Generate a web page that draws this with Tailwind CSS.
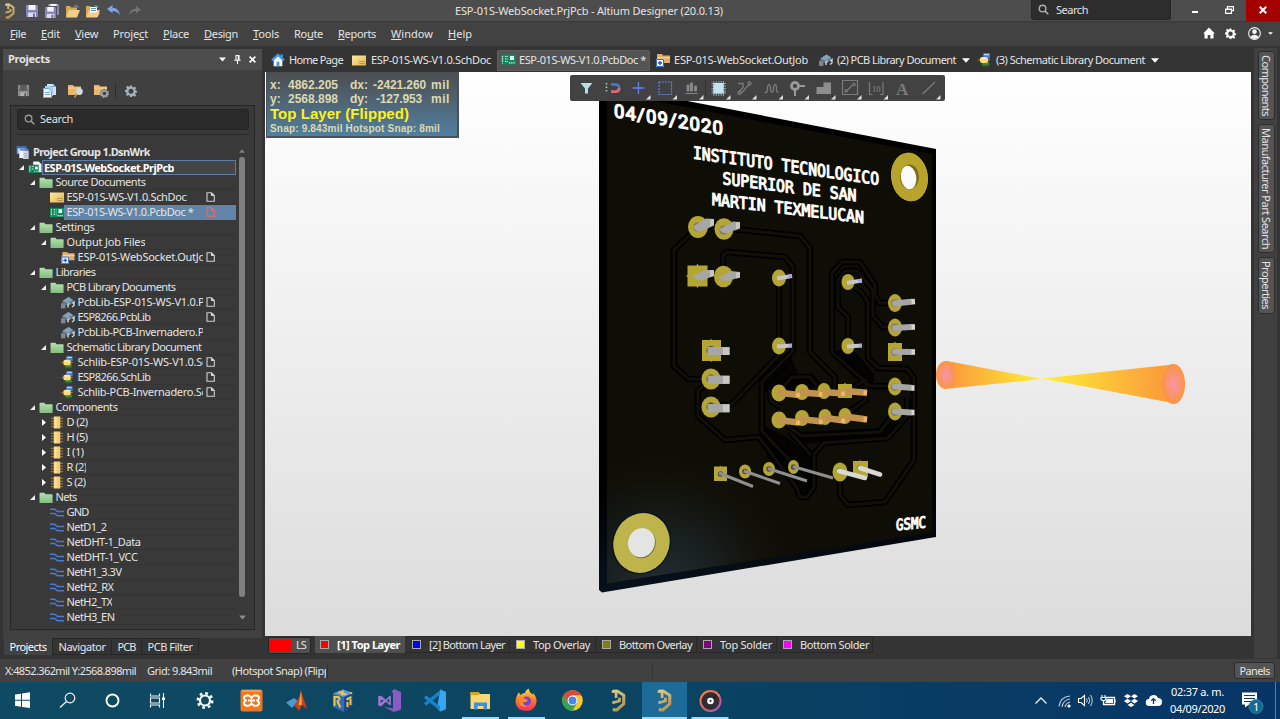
<!DOCTYPE html>
<html lang="en">
<head>
<meta charset="utf-8">
<title>ESP-01S-WebSocket.PrjPcb - Altium Designer (20.0.13)</title>
<script src="https://cdn.jsdelivr.net/npm/@tailwindcss/browser@4"></script>
</head>
<body class="w-[1280px] h-[719px] overflow-hidden bg-[#343434] text-[#e4e4e4] text-[11px] leading-[15px] font-['Noto_Sans','Open_Sans',sans-serif] flex flex-col select-none">

<!-- icon library -->
<svg class="absolute w-0 h-0">
  <defs>
    <linearGradient id="gold" gradientUnits="userSpaceOnUse" x1="0" y1="0" x2="16" y2="24"><stop offset="0" stop-color="#e6cf8f"/><stop offset="1" stop-color="#a98a45"/></linearGradient>
    <linearGradient id="ff" x1="0" y1="0" x2="0" y2="1"><stop offset="0" stop-color="#ffe23c"/><stop offset=".5" stop-color="#ff7a24"/><stop offset="1" stop-color="#fa2c5c"/></linearGradient>
    <linearGradient id="grv" x1="0" y1="0" x2="1" y2="1"><stop offset="0" stop-color="#ff8a3c"/><stop offset=".5" stop-color="#e0605c"/><stop offset="1" stop-color="#a05ce0"/></linearGradient>
    <linearGradient id="grn" x1="0" y1="0" x2="0" y2="1"><stop offset="0" stop-color="#b4e3ad"/><stop offset="1" stop-color="#85bd80"/></linearGradient>
    <linearGradient id="ylw" x1="0" y1="0" x2="1" y2="1"><stop offset="0" stop-color="#ffeaa0"/><stop offset="1" stop-color="#e0b552"/></linearGradient>
  </defs>
  <symbol id="altium" viewBox="0 0 16 24"><path d="M3 4V2.500L7 2 14 6.500v9L6.500 22 2.500 21.500" fill="none" stroke="url(#gold)" stroke-width="3.200" stroke-linejoin="round"/><path d="M6 3v6.500M2 14.500 9.500 12.500V9" fill="none" stroke="url(#gold)" stroke-width="2.800"/></symbol>
  <symbol id="save" viewBox="0 0 14 14"><path d="M1 1h11l1 1v11H1z" fill="#8583bb"/><path d="M3.500 1h7v5h-7z" fill="#f4f4fa"/><path d="M3 8.500h8V13H3z" fill="#dcdcec"/><path d="M8 9.500h2V13H8z" fill="#6e6ca8"/></symbol>
  <symbol id="saveg" viewBox="0 0 14 14"><path d="M1 1h12v12H1z" fill="#8a8a8a"/><path d="M3.500 1h7v5h-7z" fill="#5a5a5a"/><path d="M2 6.500h10" stroke="#454545"/><path d="M3.500 9h7v4h-7z" fill="#b0b0b0"/><path d="M8 10h1.500v3H8z" fill="#444"/></symbol>
  <symbol id="open" viewBox="0 0 16 14"><path d="M1 13V2h4l1 1.500h6V6" fill="#d9a857"/><path d="M1 13.500 4 6h11l-3 7.500z" fill="#f3ce86"/><path d="M9 2.200q3-1.500 4.500 1.300" stroke="#4e93ad" stroke-width="1.400" fill="none"/></symbol>
  <symbol id="home" viewBox="0 0 16 16"><path d="M3 7v8h10V7L8 3z" fill="#f3f7fb"/><path d="M1 8.500 8 2l7 6.500" fill="none" stroke="#3e93e6" stroke-width="2.600"/><path d="M11 1.500h2.500V6H11z" fill="#3e93e6"/><path d="M6.500 10h3v5h-3z" fill="#3e93e6"/></symbol>
  <symbol id="sch" viewBox="0 0 14 11"><path d="M0 .5h14v10H0z" fill="url(#ylw)"/><path d="M7.500 6h5v3h-5z" fill="#b8954a"/><path d="M8 7.500h4" stroke="#f7dc94" stroke-width=".8"/></symbol>
  <symbol id="pcb" viewBox="0 0 15 11"><path d="M0 .5h15v10H0z" fill="#0f8a5c"/><path d="M1.500 2v7.500M4 2.500h3M4 5h3M4 7.500h3" stroke="#c9f1dd" stroke-width="1.200" stroke-dasharray="1.500 .8" fill="none"/><path d="M9 2h4v4H9z" fill="#e8fff4"/><path d="M8 8.800h6" stroke="#e8fff4" stroke-width="1.200" stroke-dasharray="1.200 1"/></symbol>
  <symbol id="job" viewBox="0 0 14 14"><path d="M1 9V1h5l1 1.500h7V10H1z" fill="#dcae6c"/><path d="M1 4h13v1.500H1z" fill="#f3d29c"/><path d="M0 6h8v8H0z" fill="#eef4ff"/><path d="M.5 6.500h7v7h-7z" fill="none" stroke="#2f6fd6"/><path d="M2 10h4M4 8v4" stroke="#2157b8" stroke-width="1.300"/></symbol>
  <symbol id="plib" viewBox="0 0 14 12"><path d="M1.500 4.500 7.500.5l4.500 3v3L7 9.500 1.500 6.500z" fill="#5f7c90"/><path d="M1.500 4.500 7.500.5l4.500 3-5.500 3z" fill="#86a1b3"/><path d="M0 6.500h4.500V12H0z" fill="#6c767e"/><path d="M1 7.500v4M3 7.500v4" stroke="#a4aeb5" stroke-width=".7"/><path d="M7 11V8.500q0-1.500 1.500-1.500M11 10.500l2-1.500V5.500L11.500 7" stroke="#ccd6dc" stroke-width="1.400" fill="none"/></symbol>
  <symbol id="slib" viewBox="0 0 14 14"><path d="M5 .5h7v5H5z" fill="#3f7fd8"/><path d="M6 1.500h5" stroke="#b5d5ff" stroke-width="1.500"/><path d="M4 9h7v3.500H4z" fill="#3b8a2c"/><path d="M5 13.500v-2M7.500 14v-2M10 13.500v-2" stroke="#2a6a20"/><rect x="2" y="4" width="8" height="6" rx="2" fill="#ffd978"/><path d="M3.500 5.500h5" stroke="#fff3c8"/><path d="M0 7h2M10 7h2" stroke="#b08a30"/></symbol>
  <symbol id="folder" viewBox="0 0 13 11"><path d="M.5 10.500V1.800q0-.8.800-.8H5l1 1.500h6q.6 0 .6.700v7.300z" fill="url(#grn)"/></symbol>
  <symbol id="chip" viewBox="0 0 14 14"><path d="M.5 2.500h13M.5 5.500h13M.5 8.500h13M.5 11.500h13" stroke="#a8883f"/><path d="M3.500.5h7v13h-7z" fill="#f5cd78"/><path d="M4.500 1h2v12h-2z" fill="#ffe0a0"/></symbol>
  <symbol id="net" viewBox="0 0 15 10"><path d="M0 1.500h5l3 2.500h7M0 6h5l3 2.500h7" fill="none" stroke="#4a7ad8" stroke-width="1.600"/></symbol>
  <symbol id="grp" viewBox="0 0 14 14"><path d="M0 0h11v9H0z" fill="#3f69b0"/><path d="M1 2.500h8V8H1z" fill="#b8cbe8"/><path d="M4 3h9v8H4z" fill="#5a86cc"/><path d="M3 5h6v8H3z" fill="#f2f5fa"/><path d="M7 5.500h6V14H7z" fill="#d5dde8"/><path d="M8 8h4M8 10h4M8 12h4" stroke="#7c8fae" stroke-width=".7"/></symbol>
  <symbol id="prj" viewBox="0 0 14 14"><path d="M5 .5h6l3 3V12H5z" fill="#f1f3f5"/><path d="M0 4h11v9H0z" fill="#0f8257"/><path d="M1.500 5.500v6M3.500 6h2M3.500 8.500h2" stroke="#bff0d9" stroke-width="1.100"/><path d="M7 6h3v3H7z" fill="#e6fff4"/><path d="M6 11h4.500" stroke="#e6fff4" stroke-dasharray="1 .8"/></symbol>
  <symbol id="page" viewBox="0 0 9 10"><path d="M1 .7h4.500L8.300 3.500V9.300H1zM5.500.7v2.800h2.800" fill="none" stroke="currentColor" stroke-width="1.100"/></symbol>
  <symbol id="mag" viewBox="0 0 12 12"><circle cx="5" cy="5" r="3.600" fill="none" stroke="currentColor" stroke-width="1.500"/><path d="m7.600 7.600 3.600 3.600" stroke="currentColor" stroke-width="1.800"/></symbol>
  <symbol id="gear" viewBox="0 0 24 24"><path fill="currentColor" fill-rule="evenodd" d="M10 1h4l.6 3.200 2.200.9L19.500 3.200l2.800 2.800-1.900 2.700.9 2.200 3.200.6v3.500l-3.200.6-.9 2.200 1.900 2.700-2.800 2.800-2.700-1.900-2.200.9L14 24h-4l-.6-3-2.200-.9-2.700 1.900L1.700 19.200l1.900-2.700-.9-2.200L0 14v-4l3-.600.9-2.200L2 4.500 4.800 1.700l2.700 1.900 2.200-.9zM12 7.500a5 5 0 1 0 0 10 5 5 0 0 0 0-10z"/></symbol>
  <symbol id="dd" viewBox="0 0 8 5"><path d="M0 .3h8L4 4.700z" fill="currentColor"/></symbol>
</svg>

<!-- title bar -->
<header class="h-[21px] shrink-0 bg-[#4d4d4d] flex items-center">
  <svg class="w-[11px] h-[16px] ml-[4px]"><use href="#altium"/></svg>
  <svg class="w-[14px] h-[14px] ml-[10px]"><use href="#save"/></svg>
  <svg class="w-[16px] h-[16px] ml-[5px]" viewBox="0 0 16 16"><use href="#save" x="3" y="0" width="13" height="13"/><path d="M0 3h13v13H0z" fill="#4d4d4d"/><use href="#save" x="0" y="3" width="13" height="13"/></svg>
  <svg class="w-[16px] h-[14px] ml-[5px]"><use href="#open"/></svg>
  <svg class="w-[16px] h-[14px] ml-[4px]" viewBox="0 0 16 14"><use href="#open" width="16" height="14"/><path d="M5 3h7v6H5z" fill="#fff"/><path d="M6 4.500h5M6 6.500h5" stroke="#5c93c6"/><path d="M2.500 13 5 8.500h10L12.500 13z" fill="#f3ce86"/></svg>
  <svg class="w-[14px] h-[11px] ml-[6px]" viewBox="0 0 14 11"><path d="M0 4 5.500 0v2.700Q12 3 13 10.500 10.500 6 5.500 6v2.200z" fill="#7fa6e4"/></svg>
  <svg class="w-[13px] h-[10px] ml-[7px]" viewBox="0 0 14 11"><path d="M14 4 8.500 0v3Q2 3 1 10.500 3.500 5.500 8.500 5.500v2.700z" fill="#747474"/></svg>
  <div class="ml-[314px] whitespace-nowrap"><span data-w="268">ESP-01S-WebSocket.PrjPcb - Altium Designer (20.0.13)</span></div>
  <div class="ml-[308px] w-[140px] h-[20px] self-start bg-[#2d2d2d] rounded-b-[3px] border border-t-0 border-[#262626] flex items-center">
    <svg class="w-[11px] h-[11px] ml-[6px] text-[#b0b0b0]"><use href="#mag"/></svg>
    <span class="ml-[7px] pb-px" data-w="32">Search</span>
  </div>
  <svg class="w-[6px] h-[3px] ml-[21px] mt-[4px]"><rect width="6" height="2" fill="#fff"/></svg>
  <svg class="w-[9px] h-[8px] ml-[27px] -mt-px" viewBox="0 0 9 8"><path d="M2.500 2.500V.7h6v4H6.500M.6 3h5.800v4.300H.6zM.6 3.500h6" fill="none" stroke="#fff" stroke-width="1.200"/></svg>
  <div class="ml-auto w-[34px] h-[21px] bg-[#a40000] flex items-center justify-center pb-px"><svg class="w-[8px] h-[8px]" viewBox="0 0 8 8"><path d="m.7.700 6.600 6.600M7.300.7.700 7.300" stroke="#fff" stroke-width="2"/></svg></div>
</header>

<!-- menu bar -->
<nav class="h-[25px] shrink-0 bg-[#424242] border-t border-[#393939] flex items-center pl-[10px] pb-[2px] gap-[15px]">
  <span data-w="16"><u>F</u>ile</span><span data-w="19"><u>E</u>dit</span><span data-w="23"><u>V</u>iew</span><span data-w="35">Proje<u>c</u>t</span><span data-w="26"><u>P</u>lace</span><span data-w="34"><u>D</u>esign</span><span data-w="26"><u>T</u>ools</span><span data-w="29">Ro<u>u</u>te</span><span data-w="38"><u>R</u>eports</span><span data-w="42"><u>W</u>indow</span><span data-w="24"><u>H</u>elp</span>
  <div class="ml-auto flex items-center pr-[7px]">
    <svg class="w-[12px] h-[12px]" viewBox="0 0 12 12"><path d="M6 .5 11.800 6.500H10.500V11.500H7.300V8H4.700v3.500H1.500V6.500H.2z" fill="#fff"/></svg>
    <svg class="w-[11px] h-[11px] ml-[10px] text-white"><use href="#gear"/></svg>
    <svg class="w-[13px] h-[13px] ml-[12px]" viewBox="0 0 14 14"><circle cx="7" cy="7" r="6.300" fill="none" stroke="#f2f2f2" stroke-width="1.200"/><circle cx="7" cy="5" r="2.500" fill="#f2f2f2"/><path d="M2.300 10.500Q7 6 11.700 10.500 7 15.500 2.300 10.500" fill="#f2f2f2"/></svg>
    <svg class="w-[5px] h-[3px] ml-[7px] text-white"><use href="#dd"/></svg>
  </div>
</nav>

<div class="h-[613px] shrink-0 flex">
  <!-- projects panel -->
  <aside class="w-[265px] h-[613px] shrink-0 flex flex-col pt-[3px] pl-[3px]">
    <div class="w-[259px] h-[589px] bg-[#404040] flex flex-col">
      <div class="h-[21px] bg-[#4d4d4d] flex items-center pl-[5px] pb-[2px] font-bold">
        <span data-w="42">Projects</span>
        <svg class="w-[7px] h-[5px] ml-[169px] mt-px text-white"><use href="#dd"/></svg>
        <svg class="w-[7px] h-[9px] ml-[8px] mt-px" viewBox="0 0 7 9"><path d="M1.500.5h4M2 .5v4.500M5 .5v4.500M4.300.5V5M.3 5.300h6.400M3.500 5.500V9" stroke="#fff" stroke-width="1.100"/></svg>
        <svg class="w-[7px] h-[7px] ml-[8px] mt-px" viewBox="0 0 8 8"><path d="m.7.700 6.600 6.600M7.300.7.700 7.300" stroke="#fff" stroke-width="1.800"/></svg>
      </div>
      <div class="h-[35px] flex items-center pl-[14px] pt-[6px]">
        <svg class="w-[13px] h-[13px]"><use href="#saveg"/></svg>
        <svg class="w-[13px] h-[14px] ml-[13px]" viewBox="0 0 13 14"><path d="M4 0h6l3 3v8H4z" fill="#cfe4f7"/><path d="M2 2h6l2 2v8H2z" fill="#a9cdee"/><path d="M0 4h6l3 3v7H0z" fill="#e8f3fd"/><path d="M.5 4.500h5.300L8.500 7v6.500h-8zM2 8.500h5M2 10.500h5" fill="none" stroke="#4d94d0" stroke-width=".8"/><path d="M8.500 2.500h3" stroke="#4d94d0"/></svg>
        <svg class="w-[16px] h-[14px] ml-[12px]" viewBox="0 0 16 14"><path d="M0 11V1h5l1 1.500h7V11z" fill="#e8b76c"/><path d="M0 4h13" stroke="#f7d79b"/><circle cx="11.500" cy="7.500" r="3.300" fill="#c7dced"/><path d="m9 10-2.500 3.500" stroke="#b98b3a" stroke-width="1.600"/></svg>
        <svg class="w-[15px] h-[14px] ml-[10px]" viewBox="0 0 15 14"><path d="M0 11V1h5l1 1.500h7V11z" fill="#e8b76c"/><path d="M0 4h13" stroke="#f7d79b"/><circle cx="10.500" cy="9.500" r="4.200" fill="#404040"/><circle cx="10.500" cy="9.500" r="2.700" fill="none" stroke="#9fa6ab" stroke-width="1.800"/><circle cx="10.500" cy="9.500" r="4" fill="none" stroke="#9fa6ab" stroke-width="1.200" stroke-dasharray="1.600 1.500"/></svg>
        <div class="w-px h-[15px] bg-[#2c2c2c] ml-[6px]"></div>
        <svg class="w-[12px] h-[12px] ml-[9px] text-[#a4b2bd]"><use href="#gear"/></svg>
      </div>
      <div class="ml-[7px] w-[245px] h-[525px] bg-[#393939] border border-[#262626] pt-[3px]">
        <div class="ml-[6px] w-[232px] h-[21px] bg-[#2b2b2b] border border-[#242424] rounded-[3px] flex items-center pl-[6px]">
          <svg class="w-[11px] h-[11px] text-[#9a9a9a]"><use href="#mag"/></svg><span class="ml-[5px] pb-[2px]" data-w="33">Search</span>
        </div>
        <div class="ml-[6px] mt-[4px] w-[232px] h-px bg-[#2a2a2a]"></div>
        <div class="flex mt-[10px]">
          <div id="tree" class="w-[225px] flex flex-col"></div>
          <div class="w-[12px] h-[480px] flex flex-col items-center py-[4px]">
            <svg class="w-[6px] h-[4px] rotate-180 text-[#808080]"><use href="#dd"/></svg>
            <div class="w-[6px] h-[440px] rounded-full bg-[#808080] mt-[4px]"></div>
            <svg class="w-[7px] h-[5px] text-[#8c8c8c] mt-[18px]"><use href="#dd"/></svg>
          </div>
        </div>
      </div>
    </div>
    <div class="h-[17px] flex pl-px">
      <div class="w-[48px] bg-[#424242] flex items-center justify-center text-white"><span data-w="37">Projects</span></div>
      <div class="w-[60px] border border-[#272727] flex items-center justify-center"><span data-w="47">Navigator</span></div>
      <div class="w-[30px] border border-l-0 border-[#272727] flex items-center justify-center"><span data-w="18">PCB</span></div>
      <div class="w-[57px] border border-l-0 border-[#272727] flex items-center justify-center"><span data-w="45">PCB Filter</span></div>
    </div>
  </aside>

  <!-- editor -->
  <main class="w-[986px] shrink-0 flex flex-col">
    <div class="h-[26px] flex items-center pl-[6px] pt-[2px]">
      <svg class="w-[14px] h-[14px] shrink-0"><use href="#home"/></svg><span class="ml-[4px] pb-[2px]" data-w="54">Home Page</span>
      <svg class="w-[14px] h-[11px] shrink-0 ml-[9px]"><use href="#sch"/></svg><span class="ml-[5px] pb-[2px]" data-w="120">ESP-01S-WS-V1.0.SchDoc</span>
      <div class="ml-[6px] w-[153px] h-[21px] shrink-0 bg-[#545454] rounded-t-[2px] border border-[#5e5e5e] flex items-center pl-[3px]"><svg class="w-[15px] h-[11px] -mt-px"><use href="#pcb"/></svg><span class="ml-[3px] pb-[2px]" data-w="127">ESP-01S-WS-V1.0.PcbDoc *</span></div>
      <svg class="w-[14px] h-[14px] shrink-0 ml-[6px]"><use href="#job"/></svg><span class="ml-[4px] pb-[2px]" data-w="134">ESP-01S-WebSocket.OutJob</span>
      <svg class="w-[14px] h-[12px] shrink-0 ml-[11px]"><use href="#plib"/></svg><span class="ml-[4px] pb-[2px]" data-w="119">(2) PCB Library Document</span>
      <svg class="w-[8px] h-[5px] shrink-0 ml-[6px] text-white"><use href="#dd"/></svg>
      <svg class="w-[14px] h-[14px] shrink-0 ml-[8px]"><use href="#slib"/></svg><span class="ml-[4px] pb-[2px]" data-w="149">(3) Schematic Library Document</span>
      <svg class="w-[8px] h-[5px] shrink-0 ml-[6px] text-white"><use href="#dd"/></svg>
    </div>

    <div class="relative w-[986px] h-[564px] overflow-hidden bg-linear-to-b from-white to-[#dcdcdc]">
      <!-- 3D board -->
      <svg class="block w-[986px] h-[564px]" viewBox="265 72 986 564">
        <defs>
          <radialGradient id="glow" gradientUnits="userSpaceOnUse" cx="660" cy="590" r="140"><stop offset="0" stop-color="#222e35"/><stop offset=".5" stop-color="#171c1a"/><stop offset="1" stop-color="#0f0e06" stop-opacity="0"/></radialGradient>
          <linearGradient id="edge" x1="0" y1="0" x2="0" y2="1"><stop offset=".8" stop-color="#000"/><stop offset="1" stop-color="#07121d"/></linearGradient>
          <linearGradient id="c1" gradientUnits="userSpaceOnUse" x1="940" y1="0" x2="1042" y2="0"><stop offset=".1" stop-color="#fb9a3c"/><stop offset="1" stop-color="#fff036"/></linearGradient>
          <linearGradient id="c2" gradientUnits="userSpaceOnUse" x1="1042" y1="0" x2="1180" y2="0"><stop offset="0" stop-color="#fff036"/><stop offset=".85" stop-color="#fb9f3a"/></linearGradient>
          <radialGradient id="c3"><stop offset="0" stop-color="#f994ae"/><stop offset="1" stop-color="#fb953f"/></radialGradient>
        </defs>
        <path d="M599 84 936 149V537L602 592.500 599 590z" fill="url(#edge)"/>
        <path d="M607 92 932 154V532.500L607 583.500z" fill="#0f0e06"/>
        <path d="M607 92 932 154V532.500L607 583.500z" fill="url(#glow)"/>
        <g fill="#030301"><path d="M762 384l28-30 8 20-12 14-14 14zM762 425l25 12 30 26-6 30-10 4-8-12-26-28zM798 432l80-4 12-14 10 4-12 20-90 6zM834 352l18-4 22 26v10l-20-6zM790 374h22l10 10-20 8-16 0z"/></g>
        <g fill="none" stroke-linejoin="round">
          <g stroke="#000" stroke-width="6.400">
            <path id="t1" d="M698 227 674 250V366L688 379H711M724 229 742 230 800 236 810 248V352L835 377 834 388M723 276V255L727 252 785 257 793 267V351L762 382V431L797 468M779 277V355L731 405H712M711 379 698 391V416L725 440 759 437 797 488 800 497H807L814 487V454L824 443 888 438 908 415 907 398M779 420 802 436 880 432 895 412M790 432 811 455M895 303H880L875 295V285L860 262H842L832 273V352L870 386H895M895 327H883L873 316V290L857 271H845L838 280V307L848 317V347M848 282 861 292 868 302V358L878 368 907 369 914 378V460L885 502 848 505 840 495V472M779 392 792 377H810L817 386M770 390 771 401 780 407M845 392 866 380V400L845 415"/>
          </g>
          <use href="#t1" stroke="#110f08" stroke-width="3"/>
        </g>
        <!-- mounting holes -->
        <ellipse cx="909.500" cy="177" rx="19" ry="25" transform="rotate(-8 909.500 177)" fill="#b9a42b" stroke="#000" stroke-width="1"/>
        <ellipse cx="909.500" cy="177" rx="9.500" ry="12.500" fill="#7c6c1c"/><ellipse cx="908.500" cy="177.500" rx="7.700" ry="11.800" transform="rotate(-8 908 177)" fill="#fafafa"/>
        <ellipse cx="641.500" cy="543" rx="28.500" ry="31" transform="rotate(25 641.500 543)" fill="#bfb44b" stroke="#0b1420" stroke-width="1.500"/>
        <ellipse cx="642.200" cy="543" rx="13.500" ry="15" transform="rotate(20 641 543)" fill="#7c742e"/><ellipse cx="641.300" cy="542.500" rx="13.300" ry="14.800" transform="rotate(20 641 543)" fill="#e4e4e2"/>
        <!-- pads -->
        <g fill="#b5a534">
          <path d="M687.500 265.500h9l1-2 1 2h9v9.500l1.500 1-1.500 1v9.500h-9l-1 1.500-1-1.500h-9v-9.500l-1.500-1 1.500-1zM702 340h8l1-1 1 1h9v21h-9l-1 1-1-1h-8zM888 343h6l1-1.500 1 1.500h6v18h-14zM838 384h6l1-1.500 1 1.500h6v14h-14zM714 466.500h6l.5-1 .5 1h6v14.500h-13zM853 461h6.500l.5-1.500.5 1.500h7.500v16h-15z"/>
          <ellipse cx="698" cy="227" rx="10" ry="11"/><ellipse cx="724" cy="229" rx="9.500" ry="10.800"/><ellipse cx="723.500" cy="276.500" rx="9.500" ry="10.800"/>
          <ellipse cx="779" cy="278" rx="7" ry="8.500"/><ellipse cx="848" cy="282" rx="6.500" ry="8"/><ellipse cx="779" cy="346" rx="7" ry="8.500"/><ellipse cx="848" cy="346" rx="6.500" ry="8"/>
          <ellipse cx="711" cy="379" rx="9.500" ry="10.500"/><ellipse cx="711" cy="407" rx="9.500" ry="10.500"/>
          <ellipse cx="895" cy="303" rx="7" ry="9"/><ellipse cx="895" cy="327.500" rx="7" ry="9"/><ellipse cx="895" cy="386.500" rx="7" ry="9"/><ellipse cx="895" cy="411.500" rx="7" ry="9"/>
          <ellipse cx="779" cy="393" rx="7.500" ry="8.500"/><ellipse cx="802" cy="392" rx="7" ry="8"/><ellipse cx="824" cy="391" rx="6.500" ry="8"/>
          <ellipse cx="779" cy="420" rx="7.500" ry="8.500"/><ellipse cx="802" cy="418" rx="7" ry="8"/><ellipse cx="825" cy="417" rx="6.500" ry="8"/><ellipse cx="845" cy="416" rx="6.500" ry="8"/>
          <ellipse cx="745" cy="471.500" rx="6" ry="7"/><ellipse cx="769" cy="469" rx="6" ry="7"/><ellipse cx="793.500" cy="467" rx="5.500" ry="7"/><ellipse cx="840" cy="472" rx="7.500" ry="9.500"/>
        </g>
        <g fill="#4a4860"><circle cx="711" cy="350.500" r="4.500"/><circle cx="711" cy="379" r="4.500"/><circle cx="711" cy="407" r="4.500"/><circle cx="745" cy="471.500" r="2.700"/><circle cx="769" cy="469" r="2.700"/><circle cx="793.500" cy="467" r="2.700"/><circle cx="720.500" cy="474" r="2.700"/></g>
        <g fill="#77756e"><circle cx="698" cy="227" r="4.500"/><circle cx="724" cy="230" r="4.500"/><circle cx="895" cy="303" r="3.800"/><circle cx="895" cy="327.500" r="3.800"/><circle cx="895" cy="352" r="3.800"/><circle cx="895" cy="387" r="3.800"/><circle cx="895" cy="412" r="3.800"/></g>
        <!-- pins -->
        <g fill="#a6a6a4"><path d="M693.500 226 706 218.500l8 .5v6.500l-14 6.500q-6-1-6.500-6zM719.500 229 733 221.500l7 .5v6.500L726 233.500q-5-.5-6.500-4.500zM693 276 705 270l9 0v6l-13 4.500q-6 .5-8-4.500zM719 277.500 731 271l9 1v5.500l-13 3.500q-6 0-8-3.500zM707.500 347h22v8h-22zM707.500 375.500h22v8.500h-22zM707.500 404h22v8.500h-22z"/></g>
        <g fill="none" stroke-width="6" stroke="#a6a6a4" stroke-linecap="round"><path d="M895 303.500 911 301.700M895 328 911 327M895 351.800 911 352M895 386.500 911 387.800M895 411.500 911 412.400"/></g>
        <g fill="#c6c6c4"><path d="M710 219.500 714 219v6l-4 1.500zM736 222.500 740 222v6l-4 1.500zM710 270.500l4-.5v6l-4 1zM736 272.500l4-.5v5.500l-4 1zM723 347.500h6.500v7.500H723zM723 376h6.500v7.500H723zM723 404.500h6.500v7.500H723z"/></g>
        <g stroke="#d4d4d4"><path stroke-width="5.500" d="M911.500 301.700 915 301.400M911.500 327h3.500M911.500 352h3.500M911.500 388h3M911.500 412.500h3"/></g>
        <path d="M777 278.500 792 276M847 283 862 280.500M777 346.500 792 345.500M847 346.500 862 345.500" stroke="#c4c4cc" stroke-width="4"/>
        <path d="M788 276.500 792 276M858 281 862 280.500M789 345.700 792 345.500M859 345.700 862 345.500" stroke="#a8a8e0" stroke-width="3.500"/>
        <g stroke="#c2934f" stroke-width="6.500"><path d="M777 392.500 799 395M800 392.500 822 394M822 392 844 393.500M845 391 867 392.700M777 420 799 422.500M800 419 822 421.500M822 417.500 844 420.500M845 416.500 867 419.500"/></g>
        <path d="M796 394.800 800 395.200M819 394 822.500 394.300M841 393.500 845 393.800M863.500 392.500 867 393M796 422.500 800 423M819 421.500 822.500 422M841 420.500 845 421M863.500 419.300 867 419.700" stroke="#f2b465" stroke-width="4.500"/>
        <path d="M719 473 753 486.500M744 471 780 483.500M768 468.500 807 481M793 466.500 833 478" stroke="#8f8f8f" stroke-width="3"/>
        <circle cx="839" cy="470.500" r="2.600" fill="#4b9a3b"/><circle cx="859.500" cy="467.500" r="2.600" fill="#4b9a3b"/>
        <path d="M839 471 865 478M860 468 880 474.500" stroke="#d8d8d6" stroke-width="4.600" stroke-linecap="round"/>
        <!-- silkscreen -->
        <g fill="#fff" stroke="#fff" stroke-width="1.100" stroke-linejoin="round" font-family="DejaVu Sans Mono, monospace">
          <text transform="matrix(1 .165 0 1 614 117)" font-size="18.500" stroke-width="1.300" font-family="Roboto, sans-serif" textLength="109" lengthAdjust="spacing">04/09/2020</text>
          <text transform="matrix(1 .142 0 1 693 158.500)" font-size="17" textLength="186" lengthAdjust="spacingAndGlyphs">INSTITUTO TECNOLOGICO</text>
          <text transform="matrix(1 .13 0 1 722.500 184)" font-size="16.500" textLength="134" lengthAdjust="spacingAndGlyphs">SUPERIOR DE SAN</text>
          <text transform="matrix(1 .12 0 1 712 205)" font-size="16.500" textLength="152" lengthAdjust="spacingAndGlyphs">MARTIN TEXMELUCAN</text>
          <text transform="matrix(1 -.1 0 1 896 530.500)" font-size="15.500" textLength="30" lengthAdjust="spacingAndGlyphs">GSMC</text>
        </g>
        <!-- axis marker -->
        <path d="M947 361 1042 379 950 388.500z" fill="url(#c1)"/><ellipse cx="946" cy="375" rx="10" ry="14" fill="url(#c3)"/>
        <path d="M1042 378.500 1173 364.500V403z" fill="url(#c2)"/><ellipse cx="1173.500" cy="384" rx="11.500" ry="20" fill="url(#c3)"/>
      </svg>

      <!-- heads-up display -->
      <div class="absolute left-[1px] top-0 w-[193px] h-[66px] border-2 border-t-0 border-l border-[#4a5158] bg-linear-to-b from-[#4b4d50] to-[#4f80a0] font-['Liberation_Sans',sans-serif] font-bold text-[12px] leading-[14px] text-[#ded9ae] pl-[3px] pt-[6px] whitespace-nowrap">
        <div class="flex"><span class="w-[18px]">x:</span><span data-w="50">4862.205</span><span class="ml-[12px]" data-w="18">dx:</span><span class="ml-[5px]" data-w="53">-2421.260</span><span class="ml-[5px]" data-w="19">mil</span></div>
        <div class="flex"><span class="w-[18px]">y:</span><span data-w="50">2568.898</span><span class="ml-[12px]" data-w="18">dy:</span><span class="ml-[8px]" data-w="46">-127.953</span><span class="ml-[9px]" data-w="19">mil</span></div>
        <div class="flex text-[15px] leading-[16px] text-[#fff21a]"><span data-w="139">Top Layer (Flipped)</span></div>
        <div class="flex text-[10px] leading-[13px]"><span data-w="170">Snap: 9.843mil Hotspot Snap: 8mil</span></div>
      </div>

      <!-- active bar -->
      <div class="absolute left-[305px] top-[3px] w-[375px] h-[26px] bg-[#424242] rounded-[2px]">
        <svg class="w-[375px] h-[26px]" viewBox="570 75 375 26" fill="none">
          <path d="M580.500 83h12l-4.500 5.500v5h-3v-5z" fill="#b5dfe4"/>
          <path d="M611 84.500h4.500a3.500 3.500 0 0 1 3.700 3.500" stroke="#4a7ad8" stroke-width="2.400"/><path d="M611 91.700h4.500q3.700 0 3.700-3.700" stroke="#d86a7a" stroke-width="2.800"/><path d="M606.500 83v10" stroke="#a5d9a8" stroke-width="1.500" stroke-dasharray="1.500 2"/>
          <path d="M638.500 82v12M632.500 88h12" stroke="#5d86e6" stroke-width="1.300"/>
          <path d="M659 82h12.500v12.500H659z" stroke="#5d7fe6" stroke-width="1.200" stroke-dasharray="2 1"/>
          <path d="M685.500 93.500h12M687 85h2v6h-2zM690.500 83h2v8h-2zM694.500 86h2v5h-2z" stroke="#858585" stroke-width="1" fill="#858585"/>
          <path d="M705.500 80v16" stroke="#333"/>
          <path d="M711.500 83.500h14.500M711.500 86h14.500M711.500 88.500h14.500M711.500 91h14.500M711.500 93h14.500M713.800 81v15M716.300 81v15M718.800 81v15M721.200 81v15M723.500 81v15" stroke="#8fb4c8" stroke-width=".9"/><path d="M713.500 83h10v10.500h-10z" fill="#c6e2ee"/>
          <g stroke="#7b7b7b" stroke-width="1.300"><path d="M738 83.500h5v4l-4 4.500M741.500 93l8-9"/><circle cx="739.500" cy="93" r="1.500"/><circle cx="749.500" cy="83.500" r="1.500"/>
          <path d="M764.500 92q3 2 3-3v-2q1.500-5 3 0v3q1.500 5 3 0v-3q2-5 3 0v3q0 3 2 2"/></g>
          <circle cx="795" cy="86" r="3.500" stroke="#999" stroke-width="2.800"/><path d="M798 86h7M795 90v6" stroke="#999" stroke-width="2"/>
          <path d="M816.500 94v-7h7v-4.500h7.500V94z" fill="#8d8d8d"/>
          <g stroke="#7b7b7b" stroke-width="1.200"><path d="M842.500 80.500h15v14h-15zM846.500 91l6-6"/><circle cx="846" cy="91" r="1.200"/><circle cx="854" cy="84.500" r="1.200"/><path d="M869.500 82v12.500h3M883 82v12.500h-3"/></g>
          <text x="872" y="92" font-size="8.500" fill="#8a8a8a" font-family="Liberation Serif, serif">10</text>
          <text x="896" y="94.500" font-size="17" font-weight="bold" fill="#7b7b7b" font-family="Liberation Serif, serif">A</text>
          <path d="M922.500 94 935 82" stroke="#7b7b7b" stroke-width="1.300"/>
          <path fill="#e0e0e0" d="M650.500 95v4.500H646zM677 95v4.500h-4.500zM703.500 95v4.500H699zM730.500 95v4.500H726zM756.500 95v4.500H752zM783 95v4.500h-4.500zM809 95v4.500h-4.500zM835.500 95v4.500H831zM861.500 95v4.500H857zM888 95v4.500h-4.500zM940.500 95v4.500H936z"/>
        </svg>
      </div>
    </div>

    <!-- layer tabs -->
    <div class="h-[19px] flex items-start pl-[3px] whitespace-nowrap">
      <div class="w-[43px] h-[17px] shrink-0 bg-[#505050] border border-[#242424] flex items-center rounded-[2px] mt-px"><div class="w-[23px] h-[12px] mr-[4px] shrink-0 bg-[#ff0000]"></div><span class="pb-[2px]" data-w="10">LS</span></div>
      <div class="ml-[4px] w-[90px] h-[17px] shrink-0 bg-[#505050] flex items-center pl-[5px] text-white font-bold"><div class="w-[9px] h-[9px] shrink-0 bg-[#ff0000] border border-[#a9a9a9] mr-[8px]"></div><span data-w="63">[1] Top Layer</span></div>
      <div class="w-[104px] h-[17px] shrink-0 border-y border-[#292929] flex items-center pl-[7px]"><div class="w-[9px] h-[9px] shrink-0 bg-[#0000ff] border border-[#a9a9a9] mr-[8px]"></div><span data-w="76">[2] Bottom Layer</span></div>
      <div class="w-[86px] h-[17px] shrink-0 border border-r-0 border-[#292929] flex items-center pl-[6px]"><div class="w-[9px] h-[9px] shrink-0 bg-[#ffff00] border border-[#a9a9a9] mr-[8px]"></div><span data-w="57">Top Overlay</span></div>
      <div class="w-[101px] h-[17px] shrink-0 border border-r-0 border-[#292929] flex items-center pl-[6px]"><div class="w-[9px] h-[9px] shrink-0 bg-[#808000] border border-[#a9a9a9] mr-[8px]"></div><span data-w="73">Bottom Overlay</span></div>
      <div class="w-[80px] h-[17px] shrink-0 border border-r-0 border-[#292929] flex items-center pl-[6px]"><div class="w-[9px] h-[9px] shrink-0 bg-[#800080] border border-[#a9a9a9] mr-[8px]"></div><span data-w="52">Top Solder</span></div>
      <div class="w-[97px] h-[17px] shrink-0 border border-[#292929] flex items-center pl-[6px]"><div class="w-[9px] h-[9px] shrink-0 bg-[#ff00ff] border border-[#a9a9a9] mr-[8px]"></div><span data-w="69">Bottom Solder</span></div>
    </div>
  </main>

  <!-- right dock -->
  <div class="w-[23px] h-[610px] ml-[3px] mt-[2px] bg-[#404040] flex flex-col items-center gap-[4px] pt-[3px] pl-px whitespace-nowrap">
    <div class="w-[17px] h-[69px] bg-[#545454] border border-[#2c2c2c] rounded-[3px] flex items-center justify-center [writing-mode:vertical-rl]"><span data-w="61">Components</span></div>
    <div class="w-[17px] h-[129px] bg-[#545454] border border-[#2c2c2c] rounded-[3px] flex items-center justify-center [writing-mode:vertical-rl]"><span data-w="121">Manufacturer Part Search</span></div>
    <div class="w-[17px] h-[57px] bg-[#545454] border border-[#2c2c2c] rounded-[3px] flex items-center justify-center [writing-mode:vertical-rl]"><span class="-mt-[2px]" data-w="48">Properties</span></div>
  </div>
</div>

<!-- status bar -->
<div class="h-[23px] shrink-0 bg-[#414141] flex items-center pl-[5px] whitespace-nowrap">
  <span data-w="131" class="pb-px">X:4852.362mil Y:2568.898mil</span>
  <span class="ml-[11px] pb-px" data-w="65">Grid: 9.843mil</span>
  <div class="ml-[20px] w-[94px] overflow-hidden pb-px"><span data-w="98">(Hotspot Snap) (Flipp</span></div>
  <div class="w-px h-[16px] bg-[#333] ml-[1px]"></div>
  <div class="w-px h-[16px] bg-[#333] ml-[324px]"></div>
  <div class="ml-auto mr-[5px] w-[41px] h-[17px] bg-[#545454] border border-[#2b2b2b] rounded-[3px] flex items-center justify-center"><span data-w="30">Panels</span></div>
</div>

<!-- taskbar -->
<footer class="h-[37px] shrink-0 bg-linear-to-r from-[#0f4a63] via-[#0b4461] to-[#073466] flex items-center relative">
  <svg class="w-[740px] h-[37px] shrink-0" viewBox="0 682 740 37" fill="none">
    <path d="M642 682h45v37h-45z" fill="#1c6b98"/>
    <path d="M462 717h37v2h-37zM508 717h37v2h-37zM642 717h45v2h-45zM691.500 717h37v2h-37z" fill="#9bdcfa"/>
    <path d="M15 694.600l6-.9v6h-6zM22 693.500l8-1.200v7.400h-8zM15 700.700h6v6l-6-.9zM22 700.700h8v7.300l-8-1.100z" fill="#fff"/>
    <circle cx="70" cy="698" r="4.800" stroke="#f4f4f4" stroke-width="1.200"/><path d="m66.500 701.500-6.500 6" stroke="#f4f4f4" stroke-width="1.300"/>
    <circle cx="112.500" cy="700.500" r="6" stroke="#fff" stroke-width="1.900"/>
    <path d="M150.500 693.500v2.500h9v-2.500M150.500 698h9v5h-9zM150.500 707.500V705h9v2.500M163.500 693v15" stroke="#f4f4f4" stroke-width="1.100"/><path d="M162 697.500h3v2.500h-3z" fill="#fff"/>
    <g stroke="#fff"><circle cx="205" cy="700.500" r="5" stroke-width="2.200"/><circle cx="205" cy="700.500" r="7.200" stroke-width="2.600" stroke-dasharray="2.700 2.955"/></g>
    <rect x="240.500" y="689.500" width="22" height="22" rx="2" fill="#f07820"/><path d="M242 691h19" stroke="#f9a662" stroke-width="1.500"/><path d="M247 695.500q-3 0-3 2.500 0 2 2.500 2.500-2.500.5-2.500 2.500 0 2.700 3 2.700h1.500q1.500 0 3-2.500 1.500 2.500 3 2.500h1.500q3 0 3-2.700 0-2-2.500-2.500 2.500-.5 2.500-2.500 0-2.500-3-2.500h-1.500q-1.500 0-3 2.500-1.500-2.500-3-2.500zM248 700.500h7" stroke="#fff" stroke-width="1.900"/>
    <path d="M286 702.500 294 698l4 3-6 7z" fill="#4a9ad0"/><path d="M293 706q5-3 8-15.500l3.500 11L307 709l-5-4-3 6-3.500-4.500z" fill="#c8401c"/><path d="M301 690.500l-2.500 15 3.500-1z" fill="#f4a13c"/>
    <path d="M333 693.500 343 689.500l10 3.500v12l-9 7-11-5z" fill="#2c6bc0"/><path d="M333 693.500 343 689.500l10 3.500-9 4z" fill="#5a9ae0"/><path d="M344 697v15l9-7v-12z" fill="#1c4a90"/><path d="M334.500 706v-9h4q2.500 2-1 4.500l3 6M338.500 692l8 2.500M343 690.500l-1 5M347.500 707v-5M350.500 705v-6M346.500 699.500l5-2.500" stroke="#f7c531" stroke-width="2"/><path d="M350 692.500l2 1" stroke="#f7c531" stroke-width="1.500"/>
    <path d="m391 692.500 3-3.500 7 3v17.500l-7 2.500-10-5 9 1.500v-16z" fill="#8b5bc4"/><path d="M379 696.500v8.500l6-4.300zM379 704.500l2 1 9-9v8l-9-8z" stroke="#a073d4" stroke-width="1.600" stroke-linejoin="round"/>
    <path d="m440 689.500 6 2.500v17l-6 2.500-3-3z" fill="#38a5ef"/><path d="M425 696.500 441 709.500M425 704.500 441 691.500" stroke="#1683cc" stroke-width="3.400"/><path d="m440 689.500 6 2.500v17l-6 2.500z" fill="#38a5ef"/>
    <path d="M470.500 692h8l1.500 2h10v15h-19.500z" fill="#fbd774"/><path d="M470.500 692h8l1 3h-9z" fill="#dba21c"/><path d="M474 709.500v-7h13v7h-3.500v-3.500h-6v3.500z" fill="#3a91dc"/>
    <path d="M517.500 694.500q.5-1.500 1.500-2l1.500 2.500q2-2 4.500-2 .5-2.500 3.500-4.500.5 3.500 4 6l.5-1.500q4 4 3.500 9-1.500 9-10.500 9-9.500-.5-10.500-9 0-4.500 2-7.500z" fill="url(#ff)"/><circle cx="526.500" cy="701" r="4.500" fill="#7a3fd6"/><path d="M519 697q5 0 6 2l3 1q-2 3-5 2 0 3 4 4-7 2-8-4z" fill="#ff8a2c"/>
    <circle cx="572.500" cy="700.500" r="10.300" fill="#f4c72e"/><path d="M563.600 695.350A10.300 10.300 0 0 0 572.500 710.800L577 703 568 703z" fill="#35a152"/><path d="M563.600 695.350A10.300 10.300 0 0 1 581.400 695.350H572.500V698L568 703z" fill="#dc4a3a"/><circle cx="572.500" cy="700.500" r="4.900" fill="#fff"/><circle cx="572.500" cy="700.500" r="3.900" fill="#4486f4"/>
    <use href="#altium" x="609.500" y="689" width="17" height="23"/><use href="#altium" x="655.500" y="689" width="17" height="23"/>
    <circle cx="710.500" cy="701" r="10" fill="#2e2e34" stroke="url(#grv)" stroke-width="2"/><path d="M710.500 701 719 693" stroke="#1a1a1e" stroke-width="1.500"/><path d="M716 692l2.500 3.500 1-1" stroke="#f08050" stroke-width="2"/><circle cx="710.500" cy="701" r="3.300" fill="#fff"/><circle cx="710.500" cy="701" r="1" fill="#222"/>
  </svg>
  <svg class="w-[130px] h-[37px] shrink-0 ml-[295px]" viewBox="1035 682 130 37" fill="none">
    <path d="m1035.500 703.500 5.500-5.500 5.500 5.500" stroke="#f0f0f0" stroke-width="1.300"/>
    <g stroke="#b8c6d2" stroke-width="1.200"><path d="M1059 706.500q1-9.500 11-10.500M1062 707q1-7 8-8M1065 707q1-4 5-5"/></g><circle cx="1069" cy="706" r="1.600" fill="#fff"/>
    <path d="M1078.500 698.500h2.500l3.500-3v10l-3.500-3h-2.500z" stroke="#fff" stroke-width="1.100"/><path d="M1086.500 698.500q1.500 2 0 4M1088.500 697q2.500 3.500 0 7M1090.500 695q3.500 5.500 0 11" stroke="#cfd8e0" stroke-width="1"/>
    <path d="M1105.500 697.500h9v7h-11V702M1115 699.500v3" stroke="#fff" stroke-width="1.300"/><path d="M1107 699h6v4h-8z" fill="#fff"/><path d="M1102 695v2M1105 695v2M1101 697.500h5v2q-2.500 2.500-5 0zM1103.500 700v4" stroke="#fff" stroke-width="1.100"/>
    <path d="m1127.500 694 3.500 2.300-3.500 2.300-3.500-2.300zM1134.500 694l3.500 2.300-3.500 2.300-3.500-2.300zM1127.500 698.800l3.500 2.300-3.500 2.300-3.500-2.300zM1134.500 698.800l3.500 2.300-3.500 2.300-3.500-2.300zM1131 702.700l3.500 2.200-3.500 2.200-3.500-2.200z" fill="#fff"/>
    <path d="M1149.500 706a3.500 3.500 0 0 1-.5-7 4.700 4.700 0 0 1 9-1 4 4 0 0 1 0 8z" fill="#fff"/><path d="M1153.500 704v-5M1151.300 700.800l2.200-2.200 2.200 2.200" stroke="#0a3a62" stroke-width="1.300"/>
  </svg>
  <div class="ml-[5px] w-[55px] shrink-0 flex flex-col items-center leading-[16.500px] text-white whitespace-nowrap"><span data-w="53">02:37 a. m.</span><span data-w="55">04/09/2020</span></div>
  <svg class="w-[23px] h-[24px] shrink-0 ml-[16px] mt-[4px]" viewBox="1241 691 23 24" fill="none"><path d="M1242 692.500h15v12h-8l-4 3v-3h-3z" fill="#fff"/><path d="M1244 695.500h11M1244 698.500h11M1244 701.500h8" stroke="#0a3a62" stroke-width="1.100"/><circle cx="1256" cy="706.500" r="7" fill="#146a90" stroke="#3c87a6" stroke-width=".8"/><text x="1253" y="710.500" font-size="11" fill="#fff" font-family="Noto Sans, sans-serif">1</text></svg>
  <div class="absolute right-[4px] top-0 w-px h-[37px] bg-[#5b7d9b]"></div>
</footer>

<script>
// left edge of icon, icon, label, label width, file mark, arrow, row kind
const rows = [
  [6,'grp','Project Group 1.DsnWrk',117,'','','b'],
  [18,'prj','ESP-01S-WebSocket.PrjPcb',130,'','o','f'],
  [29,'folder','Source Documents',90,'','o',''],
  [40,'sch','ESP-01S-WS-V1.0.SchDoc',120,'p','',''],
  [40,'pcb','ESP-01S-WS-V1.0.PcbDoc *',127,'r','','s'],
  [29,'folder','Settings',39,'','o',''],
  [40,'folder','Output Job Files',79,'','o',''],
  [51,'job','ESP-01S-WebSocket.OutJob',134,'p','',''],
  [29,'folder','Libraries',40,'','o',''],
  [40,'folder','PCB Library Documents',109,'','o',''],
  [51,'plib','PcbLib-ESP-01S-WS-V1.0.PcbLib',153,'p','',''],
  [51,'plib','ESP8266.PcbLib',73,'p','',''],
  [51,'plib','PcbLib-PCB-Invernadero.PcbLib',152,'','',''],
  [40,'folder','Schematic Library Document',135,'','o',''],
  [51,'slib','Schlib-ESP-01S-WS-V1.0.SchLib',151,'p','',''],
  [51,'slib','ESP8266.SchLib',73,'p','',''],
  [51,'slib','Schlib-PCB-Invernadero.SchLib',150,'p','',''],
  [29,'folder','Components',62,'','o',''],
  [40,'chip','D (2)',21,'','c',''],[40,'chip','H (5)',21,'','c',''],[40,'chip','I (1)',17,'','c',''],[40,'chip','R (2)',20,'','c',''],[40,'chip','S (2)',19,'','c',''],
  [29,'folder','Nets',21,'','o',''],
  [40,'net','GND',22,'','',''],[40,'net','NetD1_2',40,'','',''],[40,'net','NetDHT-1_Data',74,'','',''],[40,'net','NetDHT-1_VCC',71,'','',''],
  [40,'net','NetH1_3.3V',55,'','',''],[40,'net','NetH2_RX',47,'','',''],[40,'net','NetH2_TX',46,'','',''],[40,'net','NetH3_EN',48,'','','']
];
const labelClass = {
  '': 'flex-1 min-w-0 h-[15px] flex items-center border-b border-[#343434] pl-[2.5px] pr-[33px] pb-px relative',
  b: 'flex-1 min-w-0 h-[15px] flex items-center pl-[3px] pb-[2px] font-bold relative',
  f: 'flex-1 min-w-0 h-[15px] flex items-center pl-px pb-px font-bold text-white bg-[#454545] border border-[#5d7fa5] relative',
  s: 'flex-1 min-w-0 h-[15px] flex items-center pl-[2.5px] pb-[2px] bg-[#6185a8] relative'
};
document.getElementById('tree').innerHTML = rows.map(([x,icon,label,w,mark,arrow,kind]) => `
  <div class="h-[15px] flex items-center">
    <div class="shrink-0 flex justify-end items-center pr-[4px]" style="width:${x-1}px">${arrow==='o'?'<svg class="w-[5px] h-[5px] shrink-0" viewBox="0 0 5 5"><path d="M5 0v5H0z" fill="#f0f0f0"/></svg>':arrow==='c'?'<svg class="w-[4px] h-[7px] shrink-0" viewBox="0 0 4 7"><path d="M0 0 4 3.500 0 7z" fill="#fff"/></svg>':''}</div>
    <svg class="w-[14px] h-[13px] shrink-0 -mt-px"><use href="#${icon}"/></svg>
    <div class="${labelClass[kind]}">
      <div class="overflow-hidden whitespace-nowrap h-[15px] shrink min-w-0"><span data-w="${w}">${label}</span></div>
      ${mark?`<svg class="absolute right-[21px] top-[2px] w-[9px] h-[10px] ${mark==='r'?'text-[#ee6a6a]':'text-[#d0d0d0]'}"><use href="#page"/></svg>`:''}
    </div>
  </div>`).join('');

// letter-spacing that gives each label its data-w width
const labels = [...document.querySelectorAll('[data-w]')];
function fit() {
  labels.forEach(e => { e.style.display = 'inline-block'; e.style.whiteSpace = 'nowrap'; e.style.flexShrink = 0; e.style.letterSpacing = '0px'; });
  const sizes = labels.map(e => {
    const r = e.getBoundingClientRect();
    return getComputedStyle(e).writingMode.startsWith('vertical') ? r.height : r.width;
  });
  labels.forEach((e, i) => { e.style.letterSpacing = ((+e.dataset.w - sizes[i]) / e.textContent.length).toFixed(3) + 'px'; });
}
function whenStyled() {
  fit();
  if (getComputedStyle(document.body).fontSize !== '11px') requestAnimationFrame(whenStyled);
}
whenStyled();
window.addEventListener('load', fit);
document.fonts.ready.then(fit);
</script>
</body>
</html>
